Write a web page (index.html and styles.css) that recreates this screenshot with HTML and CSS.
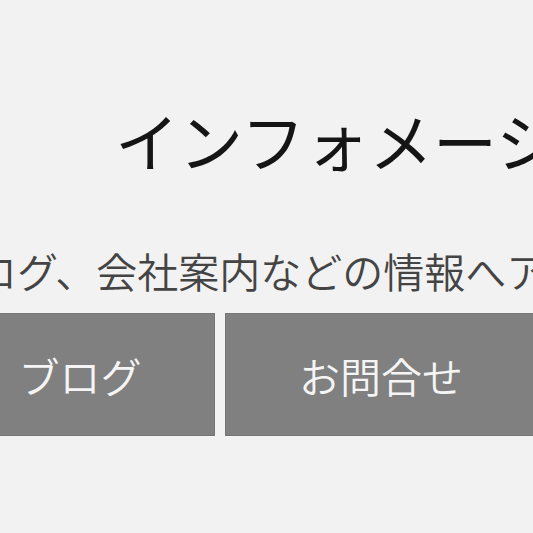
FILE: index.html
```html
<!DOCTYPE html>
<html lang="ja">
<head>
<meta charset="utf-8">
<title>インフォメーション</title>
<link rel="stylesheet" href="styles.css">
</head>
<body>
<main class="page">
  <h1 class="title">インフォメーション</h1>
  <p class="lead">ブログ、会社案内などの情報へアクセス</p>
  <nav class="buttons">
    <a class="btn btn-blog" href="#">ブログ</a>
    <a class="btn btn-contact" href="#">お問合せ</a>
  </nav>
</main>
</body>
</html>
```
FILE: styles.css
```css
html, body {
  margin: 0;
  padding: 0;
  background: #f2f2f2;
  overflow: hidden;
}
.page {
  width: 533px;
  height: 533px;
  overflow: hidden;
  font-family: "Noto Sans CJK JP", "Noto Sans", sans-serif;
}
.title {
  margin: 107px 0 0 115px;
  font-size: 64px;
  line-height: 1;
  font-weight: 400;
  color: #151515;
  white-space: nowrap;
}
.lead {
  margin: 79px 0 0 -65px;
  font-size: 41px;
  line-height: 1;
  font-weight: 350;
  color: #444;
  white-space: nowrap;
}
.buttons {
  display: flex;
  gap: 10px;
  margin: 22px 0 0 -55px;
  width: 700px;
}
.btn {
  display: flex;
  align-items: center;
  justify-content: center;
  height: 123px;
  box-sizing: border-box;
  background: #808080;
  border: 1px solid #767676;
  color: #f5f5f5;
  font-size: 41px;
  font-weight: 350;
  text-decoration: none;
  flex: none;
}
.btn-blog {
  width: 270px;
}
.btn-contact {
  width: 312px;
}
```
